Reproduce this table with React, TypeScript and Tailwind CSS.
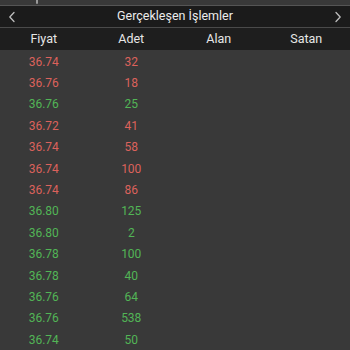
import React from 'react';

type Trade = { price: string; qty: string; up: boolean };

const trades: Trade[] = [
  { price: '36.74', qty: '32', up: false },
  { price: '36.76', qty: '18', up: false },
  { price: '36.76', qty: '25', up: true },
  { price: '36.72', qty: '41', up: false },
  { price: '36.74', qty: '58', up: false },
  { price: '36.74', qty: '100', up: false },
  { price: '36.74', qty: '86', up: false },
  { price: '36.80', qty: '125', up: true },
  { price: '36.80', qty: '2', up: true },
  { price: '36.78', qty: '100', up: true },
  { price: '36.78', qty: '40', up: true },
  { price: '36.76', qty: '64', up: true },
  { price: '36.76', qty: '538', up: true },
  { price: '36.74', qty: '50', up: true },
];

const Chevron: React.FC<{ dir: 'left' | 'right' }> = ({ dir }) => (
  <svg width="8" height="12" viewBox="0 0 8 12" fill="none" stroke="#bdbdbd" strokeWidth="1.3" strokeLinecap="round" strokeLinejoin="round">
    {dir === 'left' ? <path d="M6 1.5 L1.8 6 L6 10.5" /> : <path d="M2 1.5 L6.2 6 L2 10.5" />}
  </svg>
);

const App: React.FC = () => {
  return (
    <div className="w-[350px] h-[350px] overflow-hidden bg-[#393939]" style={{ fontFamily: 'Roboto, "Noto Sans", sans-serif' }}>
      {/* strip of the panel above */}
      <div className="h-[5px] flex">
        <span className="ml-[36px] w-[2px] h-[4px] bg-[#9a9a9a] rounded-b-sm" />
      </div>
      <div className="h-px bg-[#555555]" />

      {/* title bar */}
      <div className="h-[22px] bg-[#1b1b1b] flex items-center justify-between px-[8px] border-b border-[#4a4a4a]">
        <Chevron dir="left" />
        <span className="text-[12.5px] text-[#ececec]">Gerçekleşen İşlemler</span>
        <Chevron dir="right" />
      </div>

      {/* column headers */}
      <div className="h-[22px] bg-[#1e1e1e] grid grid-cols-4 items-center text-[12.5px] text-[#e6e6e6] text-center">
        <span>Fiyat</span>
        <span>Adet</span>
        <span>Alan</span>
        <span>Satan</span>
      </div>

      <div className="pt-[1px]">
        {trades.map((t, i) => (
          <div
            key={i}
            className={`h-[21.4px] grid grid-cols-4 items-center text-center text-[12px] ${t.up ? 'text-[#52b556]' : 'text-[#dc625c]'}`}
          >
            <span>{t.price}</span>
            <span>{t.qty}</span>
            <span />
            <span />
          </div>
        ))}
      </div>
    </div>
  );
};

export default App;
